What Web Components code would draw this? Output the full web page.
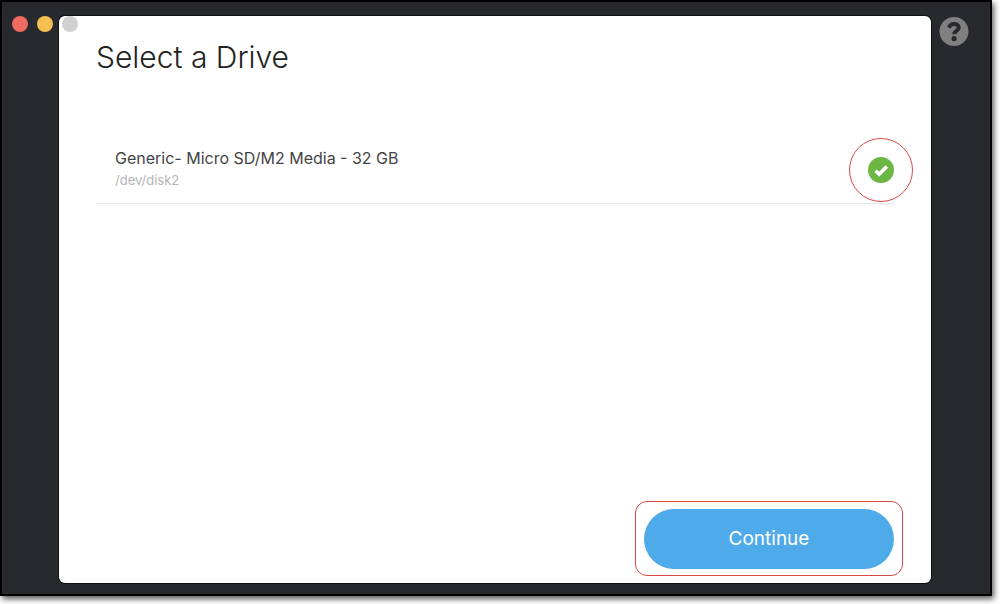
<!DOCTYPE html>
<html lang="en">
<head>
<meta charset="utf-8">
<title>Select a Drive</title>
<style>
body { margin: 0; background: #fff; font-family: Inter, "Open Sans", sans-serif; }
</style>
</head>
<body>
<app-window>
  <traffic-lights slot="controls"></traffic-lights>
  <drive-panel>
    <span slot="title">Select a Drive</span>
    <drive-item path="/dev/disk2">Generic- Micro SD/M2 Media - 32 GB</drive-item>
    <continue-button slot="action">Continue</continue-button>
  </drive-panel>
  <help-button slot="help"></help-button>
</app-window>
<script>
const define = (name, html) => customElements.define(name, class extends HTMLElement {
  constructor() {
    super();
    this.attachShadow({ mode: 'open' }).innerHTML = html;
  }
  connectedCallback() {
    const path = this.shadowRoot.querySelector('.path');
    if (path) path.textContent = this.getAttribute('path');
  }
});

define('app-window', `
<style>
:host { box-sizing: border-box; min-height: 100vh; padding: 0 8px 8px 0; display: grid; }
.frame { position: relative; box-sizing: border-box; display: grid; grid-template-columns: 57px minmax(0, 1fr) 59px;
  border: 2px solid #000; background: #28292d; padding: 14px 0 11px; box-shadow: 2px 3px 6px rgba(0,0,0,.65); }
.controls { position: absolute; left: 10px; top: 14px; z-index: 1; }
main { display: grid; }
.help { padding-left: 8px; }
</style>
<div class="frame">
  <div class="controls"><slot name="controls"></slot></div>
  <div></div>
  <main><slot></slot></main>
  <div class="help"><slot name="help"></slot></div>
</div>`);

define('traffic-lights', `
<style>
:host { display: flex; gap: 9px; }
button { width: 16px; height: 16px; padding: 0; border: 0; border-radius: 50%; }
.close { background: #ed6b60; }
.min { background: #f5c04f; }
.zoom { background: #d0d0d0; }
</style>
<button class="close" aria-label="Close"></button>
<button class="min" aria-label="Minimize"></button>
<button class="zoom" aria-label="Zoom" disabled></button>`);

define('help-button', `
<style>
:host { display: block; }
button { display: block; width: 30px; height: 30px; padding: 0; border: 0; background: none; }
svg { display: block; }
</style>
<button aria-label="Help"><svg width="30" height="30" viewBox="0 0 30 30">
<circle cx="15" cy="15.4" r="14.5" fill="#808080"/>
<path d="M9.8 11.8C10.9 9.2 12.6 8.1 15.1 8.1C18 8.1 19.8 9.6 19.8 11.7C19.8 14.5 15.2 14.7 15.2 18.2" fill="none" stroke="#28292d" stroke-width="4"/>
<circle cx="15.1" cy="22.6" r="2.6" fill="#28292d"/>
</svg></button>`);

define('drive-panel', `
<style>
:host { display: flex; flex-direction: column; box-sizing: border-box; background: #fff; border-radius: 6px;
  box-shadow: 0 0 0 1px #111; padding: 20px 28px 7px 37px; }
h1 { margin: 0; font-size: 30px; line-height: 42px; font-weight: 300; color: #222; }
.list { flex: 1; padding: 58px 9px 0 0; }
footer { display: flex; justify-content: flex-end; }
</style>
<h1><slot name="title"></slot></h1>
<div class="list"><slot></slot></div>
<footer><slot name="action"></slot></footer>`);

define('drive-item', `
<style>
:host { display: block; border-bottom: 1px solid #e6e6e6; }
label { display: flex; align-items: center; justify-content: space-between; height: 67px; padding-left: 19px; }
.text { padding-bottom: 3px; }
.name { display: block; font-size: 16px; line-height: 24px; color: #444; }
.path { display: block; font-size: 13px; line-height: 20px; color: #b5b5b5; }
.pick { position: relative; display: grid; width: 26px; height: 26px; }
.ring { position: absolute; inset: -19px; border: 1px solid #d94a45; border-radius: 50%; pointer-events: none; }
input { appearance: none; margin: 0; width: 26px; height: 26px; border-radius: 50%; background: #6cb644; grid-area: 1 / 1; }
svg { grid-area: 1 / 1; pointer-events: none; position: relative; }
</style>
<label>
  <span class="text"><span class="name"><slot></slot></span><span class="path"></span></span>
  <span class="pick">
    <input type="radio" name="drive" checked>
    <svg width="26" height="26" viewBox="0 0 26 26"><path d="M7.6 13.8L11.2 17.3L18.7 9.4" fill="none" stroke="#fff" stroke-width="3.6"/></svg>
    <span class="ring"></span>
  </span>
</label>`);

define('continue-button', `
<style>
:host { display: block; flex: 0 1 268px; box-sizing: border-box; border: 1px solid #d94a45; border-radius: 12px; padding: 7px 8px 6px; }
button { display: block; width: 100%; height: 60px; padding: 0; border: 0; border-radius: 30px; background: #4eaae8; color: #fff;
  font-family: inherit; font-size: 19px; line-height: 28px; }
</style>
<button><slot></slot></button>`);
</script>
</body>
</html>
